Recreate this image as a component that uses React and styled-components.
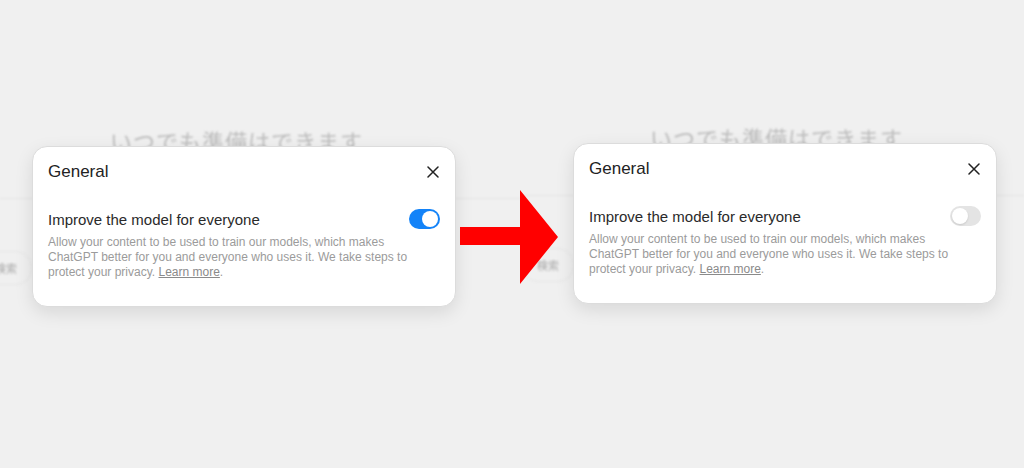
import React from "react";
import styled, { createGlobalStyle } from "styled-components";

const GlobalStyle = createGlobalStyle`
  html, body {
    margin: 0;
    padding: 0;
    background: #f0f0f0;
  }
  body {
    font-family: "Liberation Sans", Arial, sans-serif;
  }
`;

const Page = styled.div`
  position: relative;
  display: flex;
  width: 1024px;
  height: 468px;
  overflow: hidden;
  background: #f0f0f0;
`;

const Shot = styled.div`
  position: relative;
  width: ${(p) => p.$width}px;
  height: 100%;
  overflow: hidden;
  background: #f0f0f0;
`;

// faded page behind the modal
const Backdrop = styled.div`
  display: flex;
  flex-direction: column;
  padding-top: ${(p) => p.$top}px;
  filter: blur(0.8px);
`;

const Headline = styled.div`
  padding-left: ${(p) => p.$indent}px;
  font-family: "Noto Sans CJK JP", sans-serif;
  font-size: 22px;
  letter-spacing: 1px;
  line-height: 32px;
  color: #bcbcbc;
`;

const Rule = styled.div`
  margin-top: 42px;
  height: 1px;
  background: #e4e4e4;
`;

const SearchPill = styled.div`
  align-self: flex-start;
  margin: 52px 0 0 ${(p) => p.$left}px;
  padding: 0 14px;
  height: 32px;
  border: 1px solid #e6e6e6;
  border-radius: 16px;
  display: flex;
  align-items: center;
  font-family: "Noto Sans CJK JP", sans-serif;
  font-size: 11px;
  color: #a8a8a8;
`;

const Dialog = styled.div`
  position: absolute;
  left: ${(p) => p.$left}px;
  top: ${(p) => p.$top}px;
  width: 424px;
  box-sizing: border-box;
  padding: 13px 15px 26px 15px;
  background: #ffffff;
  border: 1px solid #dcdcdc;
  border-radius: 15px;
  box-shadow: 0 6px 18px rgba(0, 0, 0, 0.1);
`;

const TitleRow = styled.div`
  display: flex;
  align-items: center;
  justify-content: space-between;
  height: 24px;
`;

const Title = styled.h2`
  margin: 0;
  font-size: 17px;
  font-weight: 400;
  color: #222;
`;

const CloseButton = styled.button`
  display: flex;
  align-items: center;
  justify-content: center;
  width: 24px;
  height: 24px;
  margin-right: -5px;
  padding: 0;
  border: none;
  background: none;
  color: #222;
`;

const SettingRow = styled.div`
  margin-top: 25px;
  display: flex;
  align-items: center;
  justify-content: space-between;
  height: 20px;
`;

const SettingLabel = styled.div`
  font-size: 15px;
  color: #2a2a2a;
`;

const Toggle = styled.div`
  position: relative;
  width: 31px;
  height: 20px;
  border-radius: 10px;
  background: ${(p) => (p.$on ? "#1383f8" : "#e4e4e4")};
`;

const Knob = styled.span`
  position: absolute;
  top: 2px;
  left: ${(p) => (p.$on ? "13px" : "2px")};
  width: 16px;
  height: 16px;
  border-radius: 50%;
  background: #fff;
  box-shadow: ${(p) => (p.$on ? "none" : "0 1px 2px rgba(0,0,0,0.12)")};
`;

const Description = styled.p`
  margin: 6px 0 0;
  max-width: 370px;
  font-size: 12px;
  line-height: 15px;
  color: #9b9b9b;
  a {
    color: #8a8a8a;
    text-decoration: underline;
  }
`;

const Arrow = styled.svg`
  position: absolute;
  left: 460px;
  top: 190px;
`;

const CloseIcon = () => (
  <svg width="12" height="12" viewBox="0 0 12 12">
    <path
      d="M1 1 L11 11 M11 1 L1 11"
      stroke="currentColor"
      strokeWidth="1.5"
      strokeLinecap="round"
    />
  </svg>
);

const SettingsDialog = ({ left, top, on }) => (
  <Dialog $left={left} $top={top}>
    <TitleRow>
      <Title>General</Title>
      <CloseButton aria-label="Close">
        <CloseIcon />
      </CloseButton>
    </TitleRow>
    <SettingRow>
      <SettingLabel>Improve the model for everyone</SettingLabel>
      <Toggle $on={on}>
        <Knob $on={on} />
      </Toggle>
    </SettingRow>
    <Description>
      Allow your content to be used to train our models, which makes ChatGPT
      better for you and everyone who uses it. We take steps to protect your
      privacy. <a href="#">Learn more</a>.
    </Description>
  </Dialog>
);

const App = () => {
  return (
    <>
      <GlobalStyle />
      <Page>
        <Shot $width={520}>
          <Backdrop $top={124}>
            <Headline $indent={110}>いつでも準備はできます</Headline>
            <Rule />
            <SearchPill $left={-20}>検索</SearchPill>
          </Backdrop>
          <SettingsDialog left={32} top={146} on />
        </Shot>
        <Shot $width={504}>
          <Backdrop $top={121}>
            <Headline $indent={130}>いつでも準備はできます</Headline>
            <Rule />
            <SearchPill $left={2}>検索</SearchPill>
          </Backdrop>
          <SettingsDialog left={53} top={143} on={false} />
        </Shot>
        <Arrow width="98" height="94" viewBox="0 0 98 94">
          <polygon
            points="0,37 60,37 60,0 98,47 60,94 60,55 0,55"
            fill="#ff0000"
          />
        </Arrow>
      </Page>
    </>
  );
};

export default App;
